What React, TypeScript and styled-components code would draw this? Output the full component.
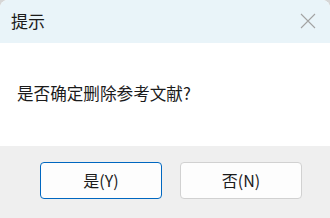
import styled, { createGlobalStyle } from 'styled-components';

const GlobalStyle = createGlobalStyle`
  html, body {
    margin: 0;
    padding: 0;
    background: #d6d6d6;
  }
  * {
    box-sizing: border-box;
  }
`;

const Dialog = styled.div`
  width: 330px;
  height: 218px;
  display: flex;
  flex-direction: column;
  background: #ffffff;
  border-radius: 8px 8px 0 0;
  overflow: hidden;
  font-family: "Noto Sans CJK SC", "Noto Sans", sans-serif;
  color: #1b1b1b;
`;

const Header = styled.div`
  height: 43px;
  display: flex;
  align-items: center;
  justify-content: space-between;
  padding: 0 14px 0 11px;
  background: #e9f4f9;
`;

const Title = styled.div`
  font-size: 17px;
  line-height: 1;
  padding-bottom: 2px;
`;

const CloseButton = styled.button`
  width: 17px;
  height: 17px;
  padding: 0;
  border: none;
  background: none;
  display: flex;
  align-items: center;
  justify-content: center;
  margin-top: -2px;
  svg {
    width: 16px;
    height: 16px;
  }
`;

const Body = styled.div`
  flex: 1;
  display: flex;
  align-items: center;
  padding: 0 17px 2px;
  font-size: 16.6px;
  line-height: 1;
`;

const Footer = styled.div`
  height: 72px;
  display: flex;
  justify-content: flex-end;
  gap: 18px;
  padding: 16px 28px 0 0;
  background: #efefef;
`;

const Button = styled.button<{ $primary?: boolean }>`
  width: 122px;
  height: 37px;
  border-radius: 4px;
  border: 1px solid ${(p) => (p.$primary ? '#0067c0' : '#d1d1d1')};
  background: #fdfdfd;
  font-family: "Noto Sans CJK SC", "Noto Sans", sans-serif;
  font-size: 16px;
  color: #1b1b1b;
  padding: 0 0 1px;
`;

export default function App() {
  return (
    <>
      <GlobalStyle />
      <Dialog>
        <Header>
          <Title>提示</Title>
          <CloseButton aria-label="关闭">
            <svg viewBox="0 0 16 16" fill="none" stroke="#a3a3a3" strokeWidth="1.1">
              <path d="M1 1 L15 15 M15 1 L1 15" />
            </svg>
          </CloseButton>
        </Header>
        <Body>是否确定删除参考文献?</Body>
        <Footer>
          <Button $primary>是(Y)</Button>
          <Button>否(N)</Button>
        </Footer>
      </Dialog>
    </>
  );
}
